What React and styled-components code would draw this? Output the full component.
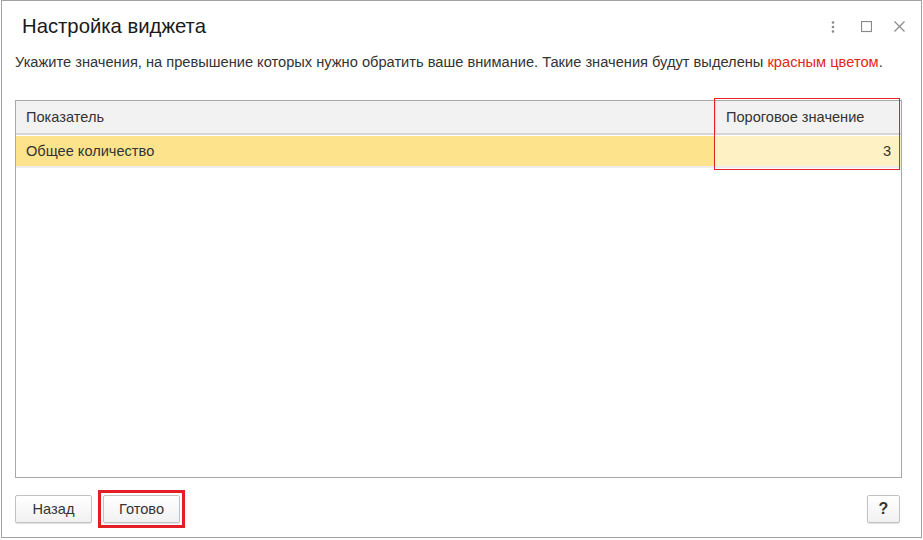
import React from "react";
import styled, { createGlobalStyle } from "styled-components";

const Global = createGlobalStyle`
  html, body {
    margin: 0;
    padding: 0;
    background: #ffffff;
    font-family: "Liberation Sans", Arial, sans-serif;
  }
`;

const Window = styled.div`
  box-sizing: border-box;
  margin-left: 1px;
  width: 921px;
  height: 538px;
  border: 1px solid #a3a3a3;
  background: #fff;
  display: flex;
  flex-direction: column;
`;

const TitleBar = styled.div`
  height: 49px;
  display: flex;
  align-items: center;
  padding: 2px 16px 0 20px;
  box-sizing: border-box;
`;

const Title = styled.h1`
  flex: 1;
  margin: 0;
  font-size: 20.3px;
  font-weight: normal;
  color: #1a1a1a;
`;

const Tools = styled.div`
  display: flex;
  align-items: center;
  color: #8a8a8a;
`;

const ToolIcon = styled.svg`
  display: block;
  width: ${(p) => p.$w || 12}px;
  height: 12px;
  margin-left: ${(p) => p.$gap || 0}px;
`;

const Hint = styled.p`
  margin: 0;
  padding: 3px 0 0 13px;
  height: 26px;
  box-sizing: border-box;
  font-size: 14.65px;
  color: #333;
  line-height: 18px;
`;

const Red = styled.span`
  color: #e32619;
`;

const Body = styled.div`
  padding: 24px 19px 0 13px;
  display: flex;
  flex-direction: column;
`;

const Table = styled.div`
  position: relative;
  box-sizing: border-box;
  height: 378px;
  border: 1px solid #a8a8a8;
  display: flex;
  flex-direction: column;
`;

const Row = styled.div`
  display: grid;
  grid-template-columns: 699px 1fr;
  height: ${(p) => (p.$head ? 32 : 30)}px;
  background: ${(p) => (p.$head ? "#f2f2f2" : "#fde48c")};
  border-bottom: 2px solid ${(p) => (p.$head ? "#d6d6d6" : "#ececec")};
  margin-bottom: ${(p) => (p.$head ? 1 : 0)}px;
`;

const Cell = styled.div`
  display: flex;
  align-items: center;
  justify-content: ${(p) => (p.$right ? "flex-end" : "flex-start")};
  padding: 0 10px;
  font-size: 14.6px;
  color: #333;
  background: ${(p) => p.$bg || "transparent"};
  border-left: ${(p) => (p.$divider ? "1px solid #dadada" : "none")};
`;

const Highlight = styled.div`
  position: absolute;
  left: 698px;
  top: -3px;
  width: 186px;
  height: 72px;
  box-sizing: border-box;
  border: 1px solid #e3232c;
  pointer-events: none;
`;

const Footer = styled.div`
  flex: 1;
  display: flex;
  align-items: flex-start;
  padding: 17px 21px 0 13px;
`;

const Button = styled.button`
  box-sizing: border-box;
  height: 28px;
  width: ${(p) => p.$w}px;
  border: 1px solid #c2c2c2;
  border-radius: 2px;
  background: linear-gradient(#ffffff, #f1f1f1);
  box-shadow: 0 1px 1px rgba(0, 0, 0, 0.12);
  font-family: "Liberation Sans", Arial, sans-serif;
  font-size: ${(p) => (p.$bold ? 16 : 14.6)}px;
  font-weight: ${(p) => (p.$bold ? "bold" : "normal")};
  color: #333;
  padding: 0;
`;

const Marked = styled.div`
  margin: -5px 0 0 6px;
  padding: 2px;
  border: 3px solid #e41e26;
  display: flex;
`;

const Spacer = styled.div`
  flex: 1;
`;

export default function App() {
  return (
    <>
      <Global />
      <Window>
        <TitleBar>
          <Title>Настройка виджета</Title>
          <Tools>
            <ToolIcon $w={4} viewBox="0 0 4 12">
              <circle cx="2" cy="1.5" r="1.3" fill="currentColor" />
              <circle cx="2" cy="6" r="1.3" fill="currentColor" />
              <circle cx="2" cy="10.5" r="1.3" fill="currentColor" />
            </ToolIcon>
            <ToolIcon $w={11} $gap={26} viewBox="0 0 11 12">
              <rect x="0.5" y="0.5" width="10" height="10" fill="none" stroke="currentColor" strokeWidth="1.2" />
            </ToolIcon>
            <ToolIcon $w={11} $gap={22} viewBox="0 0 11 12">
              <path d="M0.5 0.5 L10.5 10.5 M10.5 0.5 L0.5 10.5" stroke="currentColor" strokeWidth="1.2" fill="none" />
            </ToolIcon>
          </Tools>
        </TitleBar>
        <Hint>
          Укажите значения, на превышение которых нужно обратить ваше внимание. Такие значения будут выделены{" "}
          <Red>красным цветом</Red>.
        </Hint>
        <Body>
          <Table>
            <Row $head>
              <Cell>Показатель</Cell>
              <Cell $divider>Пороговое значение</Cell>
            </Row>
            <Row>
              <Cell>Общее количество</Cell>
              <Cell $right $bg="#fef2c4">3</Cell>
            </Row>
            <Highlight />
          </Table>
        </Body>
        <Footer>
          <Button $w={77}>Назад</Button>
          <Marked>
            <Button $w={77}>Готово</Button>
          </Marked>
          <Spacer />
          <Button $w={33} $bold>?</Button>
        </Footer>
      </Window>
    </>
  );
}
